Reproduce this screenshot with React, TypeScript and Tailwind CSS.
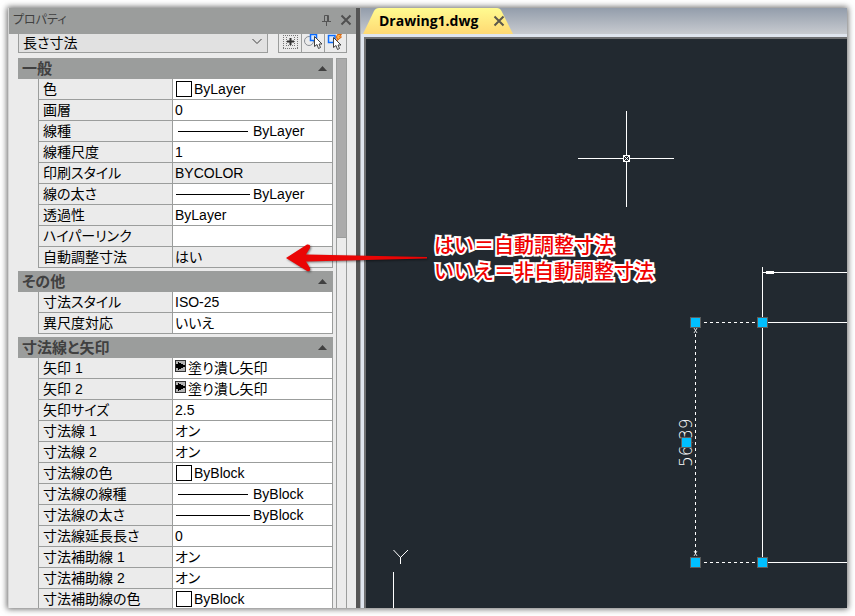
import { ReactNode } from "react";

type ValueKind = "text" | "swatch" | "linetype" | "lineweight" | "arrowhead";

interface Property {
  name: string;
  value: string;
  kind?: ValueKind;
  readOnly?: boolean;
}

interface PropertyGroup {
  title: string;
  properties: Property[];
}

const groups: PropertyGroup[] = [
  {
    title: "一般",
    properties: [
      { name: "色", value: "ByLayer", kind: "swatch" },
      { name: "画層", value: "0" },
      { name: "線種", value: "ByLayer", kind: "linetype" },
      { name: "線種尺度", value: "1" },
      { name: "印刷スタイル", value: "BYCOLOR", readOnly: true },
      { name: "線の太さ", value: "ByLayer", kind: "lineweight" },
      { name: "透過性", value: "ByLayer" },
      { name: "ハイパーリンク", value: "" },
      { name: "自動調整寸法", value: "はい", readOnly: true },
    ],
  },
  {
    title: "その他",
    properties: [
      { name: "寸法スタイル", value: "ISO-25" },
      { name: "異尺度対応", value: "いいえ" },
    ],
  },
  {
    title: "寸法線と矢印",
    properties: [
      { name: "矢印 1", value: "塗り潰し矢印", kind: "arrowhead" },
      { name: "矢印 2", value: "塗り潰し矢印", kind: "arrowhead" },
      { name: "矢印サイズ", value: "2.5" },
      { name: "寸法線 1", value: "オン" },
      { name: "寸法線 2", value: "オン" },
      { name: "寸法線の色", value: "ByBlock", kind: "swatch" },
      { name: "寸法線の線種", value: "ByBlock", kind: "linetype" },
      { name: "寸法線の太さ", value: "ByBlock", kind: "lineweight" },
      { name: "寸法線延長長さ", value: "0" },
      { name: "寸法補助線 1", value: "オン" },
      { name: "寸法補助線 2", value: "オン" },
      { name: "寸法補助線の色", value: "ByBlock", kind: "swatch" },
    ],
  },
];

const ValueIcon = ({ kind }: { kind?: ValueKind }) => {
  if (kind === "swatch") {
    return <span className="mr-px ml-[3px] size-4 shrink-0 border border-black bg-white" />;
  }
  if (kind === "linetype") {
    return <span className="mr-1 ml-[5px] h-px w-[70px] shrink-0 bg-black" />;
  }
  if (kind === "lineweight") {
    return <span className="mr-0.5 ml-[3px] h-px w-[74px] shrink-0 bg-black" />;
  }
  if (kind === "arrowhead") {
    return (
      <svg className="mb-1 ml-0.5 shrink-0" width="12" height="12" viewBox="0 0 12 12" shapeRendering="crispEdges">
        <rect x="0.5" y="0.5" width="10" height="11" fill="#b4b4b4" stroke="#333" />
        <path d="M1 4h2V2l7 3.500v1L3 10V8H1z" fill="#000" />
      </svg>
    );
  }
  return <span className="ml-px shrink-0" />;
};

const PropertyRow = ({ property, id }: { property: Property; id: string }) => (
  <tr className="h-[21px]">
    <th scope="row" className="w-[135px] border-x border-b border-[#9b9d9c] bg-[#ebebeb] p-0 pl-1 text-left font-normal">
      <label htmlFor={id} className="block h-5 text-sm leading-5 whitespace-nowrap">
        {property.name}
      </label>
    </th>
    <td className={property.readOnly ? "border-r border-b border-[#9b9d9c] bg-[#ebebeb] p-0" : "border-r border-b border-[#9b9d9c] bg-white p-0"}>
      <div className="flex h-5 items-center">
        <ValueIcon kind={property.kind} />
        <input
          id={id}
          defaultValue={property.value}
          readOnly={property.readOnly}
          className="h-5 min-w-0 flex-1 bg-transparent pl-px text-sm leading-5 outline-none"
        />
      </div>
    </td>
  </tr>
);

const Group = ({ group, index }: { group: PropertyGroup; index: number }) => (
  <section>
    <h2>
      <button className="flex h-[21px] w-full items-center justify-between bg-[#9b9d9c] pr-1.5 pl-1 text-[15px] leading-5 font-bold text-[#404040]">
        {group.title}
        <svg width="9" height="5" viewBox="0 0 9 5">
          <path d="M0 5L4.500 0L9 5z" fill="#404040" />
        </svg>
      </button>
    </h2>
    <div className="pl-5">
      <table className="w-full table-fixed border-separate border-spacing-0">
        <tbody>
          {group.properties.map((property, i) => (
            <PropertyRow key={property.name} property={property} id={`prop-${index}-${i}`} />
          ))}
        </tbody>
      </table>
    </div>
  </section>
);

const ToolButton = ({ label, children }: { label: string; children: ReactNode }) => (
  <button aria-label={label} className="flex h-[19px] w-[23px] items-start justify-center overflow-hidden border-b border-l border-[#9b9d9c] last:border-r">
    {children}
  </button>
);

const Cursor = () => (
  <path d="M0.500 0.500v10l2.500-2 1.500 4 2-1-1.500-3.500h3z" fill="#fff" stroke="#404040" />
);

const PropertiesPanel = () => (
  <aside className="flex w-[348px] shrink-0 flex-col border-l border-[#d4d4d4] bg-[#ebebeb]">
    <header className="flex h-[26px] shrink-0 items-center bg-[#9b9d9c] pr-1 pb-0.5 pl-1 text-[#404040]">
      <h1 className="flex-1 text-xs leading-5">プロパティ</h1>
      <button aria-label="自動的に隠す" className="mr-2">
        <svg width="11" height="12" viewBox="0 0 11 12" fill="none" stroke="#555">
          <path d="M3.500 7V1.500h4V7M6.500 1.500V7M1 7.500h9M5.500 8v4" />
        </svg>
      </button>
      <button aria-label="閉じる">
        <svg width="12" height="12" viewBox="0 0 12 12" stroke="#505050" strokeWidth="2">
          <path d="M1.500 1.500l9 9M10.500 1.500l-9 9" />
        </svg>
      </button>
    </header>

    <div className="flex h-[19px] shrink-0 pr-[9px] pl-[9px]">
      <div className="relative mr-2.5 flex-1">
        <select aria-label="オブジェクト" className="block h-[19px] w-full appearance-none border-x border-b border-[#9b9d9c] bg-[#e1e1e1] pl-1 text-sm leading-4 outline-none">
          <option>長さ寸法</option>
        </select>
        <svg className="pointer-events-none absolute top-1 right-1.5" width="10" height="7" viewBox="0 0 10 7" fill="none" stroke="#404040">
          <path d="M0.500 1L5 5.500L9.500 1" />
        </svg>
      </div>
      <div className="flex">
        <ToolButton label="PICKADD">
          <svg width="17" height="16" viewBox="0 0 17 16" fill="none">
            <path d="M1 1.500h16M1 14.500h16M1.500 1v14M15.500 1v14M4 11.500h10M4.500 3v9M12.500 3v9" stroke="#777" strokeDasharray="1 1" />
            <path d="M5 7.500h7M8.500 4v7" stroke="#333" strokeWidth="2" />
          </svg>
        </ToolButton>
        <ToolButton label="オブジェクトを選択">
          <svg width="20" height="18" viewBox="0 0 20 18" fill="none">
            <circle cx="6" cy="7" r="4.500" stroke="#8a8f96" />
            <path d="M7.500 0.500v6h6v-6z" fill="#dbe9fb" stroke="#0a6cff" strokeWidth="1.500" />
            <g transform="translate(11 2)"><Cursor /></g>
          </svg>
        </ToolButton>
        <ToolButton label="クイック選択">
          <svg width="20" height="18" viewBox="0 0 20 18" fill="none">
            <path d="M9 1.500H2.500v7H9z" fill="#dbe9fb" stroke="#0a6cff" strokeWidth="1.500" />
            <path d="M11.500 0.500h4l-2 2.500h2L10.500 7l1-3H10z" fill="#ffb347" stroke="#d9660f" />
            <g transform="translate(7 3)"><Cursor /></g>
          </svg>
        </ToolButton>
      </div>
    </div>

    <div className="mt-[5px] flex min-h-0 flex-1 pr-[9px] pl-[9px]">
      <div className="flex min-w-0 flex-1 flex-col gap-[3px] overflow-hidden">
        {groups.map((group, i) => (
          <Group key={group.title} group={group} index={i} />
        ))}
      </div>
      <div className="ml-[3px] w-[11px] border-x border-[#9b9d9c]">
        <div className="h-[30%] min-h-[180px] border-y border-[#9b9d9c] bg-[#ababab]" />
      </div>
    </div>
  </aside>
);

const Grip = ({ x, y }: { x: number; y: number }) => (
  <rect x={x - 5} y={y - 5} width="10" height="10" fill="#00bfff" stroke="#5d5d5d" />
);

// model space: crosshair, dimension with grips, UCS axis
const Drawing = () => (
  <svg className="block h-full w-full" fill="none" stroke="#fff" aria-label="図面">
    <g transform="translate(-366 -39)">
      <path d="M578 158.500h45M630 158.500h44M626.500 111v44M626.500 162v45" />
      <rect x="623.500" y="155.500" width="6" height="6" />
      <path d="M624 156l5 5M629 156l-5 5" />

      <path d="M762.500 267v295M762 272.500h2000M762 322.500h2000M762 562.500h2000" />
      <path d="M766 272.500h8" strokeWidth="3" />
      <path d="M704 322.500h54M704 562.500h54M695.500 334v220" strokeDasharray="3 3" />
      <path d="M694 328l3 5M697 328l-3 5M694 551l3 5M697 551l-3 5" strokeWidth="0.800" />

      <text transform="translate(692 467) rotate(-90)" className="font-['DejaVu_Sans'] text-[17px] font-extralight" fill="#fff" stroke="none">
        56.39
      </text>

      <Grip x={695.5} y={322.5} />
      <Grip x={762.5} y={322.5} />
      <Grip x={686.5} y={442.5} />
      <Grip x={695.5} y={562.5} />
      <Grip x={762.5} y={562.5} />

      <path d="M393.500 550l7 7.500 7.500-7.500M400.500 557v7M393.500 572v1000" />
    </g>
  </svg>
);

const DrawingArea = () => (
  <main className="flex min-w-0 flex-1 flex-col border-l border-[#a8abb0] bg-[#dfe5ee]">
    <div className="flex h-[26px] shrink-0 bg-linear-to-b from-[#939dab] to-[#c8cbd0] pl-0.5">
      <div className="relative flex w-[150px] items-center">
        <svg className="absolute inset-0" width="150" height="26" viewBox="0 0 150 26">
          <defs>
            <linearGradient id="tab" x1="0" y1="0" x2="0" y2="1">
              <stop offset="0" stopColor="#fffb90" />
              <stop offset="1" stopColor="#ffd973" />
            </linearGradient>
          </defs>
          <path d="M0 26L11 3Q12.500 0 16 0H134Q137 0 138.500 3L150 26z" fill="url(#tab)" />
        </svg>
        <a href="#" className="relative ml-4 flex-1 font-['Open_Sans',sans-serif] text-sm leading-5 font-bold">
          Drawing1.dwg
        </a>
        <button aria-label="タブを閉じる" className="relative mr-2">
          <svg width="12" height="12" viewBox="0 0 12 12" stroke="#5c584c" strokeWidth="2">
            <path d="M1.500 1.500l9 9M10.500 1.500l-9 9" />
          </svg>
        </button>
      </div>
    </div>
    <div className="mt-[3px] ml-[3px] min-h-0 flex-1 border-t-2 border-l-2 border-[#6f7072] bg-[#222930]">
      <Drawing />
    </div>
  </main>
);

const Callout = () => (
  <div className="pointer-events-none absolute top-[225px] left-[278px] flex">
    <svg className="mt-2.5 shrink-0 drop-shadow-[1px_1px_1px_rgba(0,0,0,0.5)]" width="144" height="30" viewBox="0 0 144 30">
      <path d="M0 15L21 1.500Q25 1 24 5L20 11.500L141 14V15.500L20 18.500L24 25Q25 29 21 28z" fill="#ea0505" />
    </svg>
    <p className="ml-1 text-xl leading-[26px] font-medium whitespace-nowrap text-[#f00000] [-webkit-text-stroke:4px_white] [font-feature-settings:normal] [paint-order:stroke_fill]">
      はい＝自動調整寸法
      <br />
      いいえ＝非自動調整寸法
    </p>
  </div>
);

const App = () => {
  return (
    <div className="h-screen bg-white p-2 font-['Liberation_Sans','Noto_Sans_CJK_JP',sans-serif] text-black [font-feature-settings:'palt']">
      <div className="relative flex h-full shadow-[0_0_6px_1px_rgba(0,0,0,0.6)]">
        <div className="flex min-w-0 flex-1 overflow-hidden">
          <PropertiesPanel />
          <div className="w-1 shrink-0 bg-[#555]" />
          <DrawingArea />
        </div>
        <Callout />
      </div>
    </div>
  );
};

export default App;
